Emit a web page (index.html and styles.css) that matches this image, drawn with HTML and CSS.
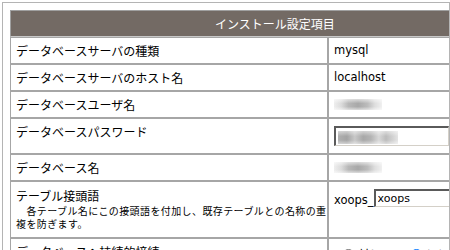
FILE: index.html
```html
<!DOCTYPE html>
<html lang="ja">
<head>
  <meta charset="UTF-8">
  <title>XOOPS インストール</title>
  <link rel="stylesheet" href="styles.css">
</head>
<body>
  <div class="frame">
    <table class="settings">
      <tr>
        <th colspan="2">インストール設定項目</th>
      </tr>
      <tr>
        <td class="label">データベースサーバの種類</td>
        <td class="value">mysql</td>
      </tr>
      <tr>
        <td class="label">データベースサーバのホスト名</td>
        <td class="value">localhost</td>
      </tr>
      <tr>
        <td class="label">データベースユーザ名</td>
        <td class="value"><span class="masked"></span></td>
      </tr>
      <tr>
        <td class="label">データベースパスワード</td>
        <td class="value">
          <div class="field pass"><span class="masked wide"></span></div>
        </td>
      </tr>
      <tr>
        <td class="label">データベース名</td>
        <td class="value"><span class="masked"></span></td>
      </tr>
      <tr>
        <td class="label tall">
          <div>テーブル接頭語</div>
          <p class="note">　各テーブル名にこの接頭語を付加し、既存テーブルとの名称の重複を防ぎます。</p>
        </td>
        <td class="value">
          <div class="prefix">xoops_<input type="text" class="field" value="xoops"></div>
        </td>
      </tr>
      <tr>
        <td class="label">データベースへ持続的接続</td>
        <td class="value">
          <label class="radio"><input type="radio" name="pconnect">はい</label>
          <label class="radio"><input type="radio" name="pconnect" checked>いいえ</label>
        </td>
      </tr>
    </table>
  </div>
</body>
</html>
```

FILE: styles.css
```css
body {
  margin: 0;
  background: #fff;
  font-family: "DejaVu Sans", "Noto Sans CJK JP", sans-serif;
  font-size: 12px;
  color: #000;
}
.frame {
  box-sizing: border-box;
  width: 448px;
  height: 300px;
  margin: 2px 0 0 2px;
  padding: 7px;
  border: 1px solid #b4b4b4;
  overflow: hidden;
}
.settings {
  width: 530px;
  border-collapse: separate;
  border-spacing: 0;
}
.settings th {
  background: #736a64;
  color: #fff;
  font-weight: normal;
  font-family: "Noto Sans CJK JP", sans-serif;
  line-height: 15px;
  padding: 5px;
  border: 1px solid #a0a0a0;
  border-bottom-color: #c8c8c8;
}
.settings td {
  border: 1px solid #a6a6a6;
  padding: 5px;
  line-height: 15px;
  vertical-align: top;
}
.label {
  width: 306px;
  font-family: "Noto Sans CJK JP", sans-serif;
}
.label.tall {
  padding-top: 6px;
  padding-bottom: 7px;
}
.note {
  margin: 1px -12px 0 0;
  font-size: 10px;
  letter-spacing: 0.4px;
  line-height: 13px;
  line-break: anywhere;
  word-break: break-all;
}
.value {
  padding-left: 4px;
  font-size: 11.5px;
}
.masked {
  display: inline-block;
  width: 48px;
  height: 11px;
  margin-top: 2px;
  vertical-align: top;
  background:
    linear-gradient(180deg, rgba(255,255,255,0.6), rgba(255,255,255,0) 40%, rgba(255,255,255,0) 70%, rgba(255,255,255,0.6)),
    linear-gradient(90deg, #eee 0, #dcdcdc 15%, #b8b8b8 30%, #a8a8a8 50%, #bcbcbc 70%, #dedede 85%, #f0f0f0 100%);
}
.masked.wide {
  width: 60px;
  height: 13px;
  margin: 2px 0 0 1px;
  background:
    linear-gradient(180deg, rgba(255,255,255,0.5), rgba(255,255,255,0) 40%, rgba(255,255,255,0) 70%, rgba(255,255,255,0.5)),
    linear-gradient(90deg, #b0b0b0 0, #a4a4a4 15%, #c8c8c8 28%, #a8a8a8 42%, #b4b4b4 55%, #d8d8d8 68%, #bcbcbc 80%, #e4e4e4 100%);
}
.field {
  box-sizing: border-box;
  border: 2px solid;
  border-color: #5a5a5a #d4d0c8 #d4d0c8 #5a5a5a;
  border-right-width: 1px;
  border-bottom-width: 1px;
  background: #fff;
}
.field.pass {
  width: 115px;
  height: 20px;
  margin: 2px 0;
  padding: 1px 0 0 1px;
}
.prefix {
  display: flex;
  align-items: flex-end;
  margin-top: 2px;
  line-height: 14px;
}
.prefix .field {
  width: 150px;
  height: 18px;
  margin: 0;
  padding: 0 2px;
  font-family: "DejaVu Sans", sans-serif;
  font-size: 11px;
  color: #000;
  outline: none;
}
.radio {
  display: inline-flex;
  align-items: center;
  margin-right: 16px;
  font-family: "Noto Sans CJK JP", sans-serif;
}
.radio input {
  margin: 5px 4px 0 8px;
}
```
